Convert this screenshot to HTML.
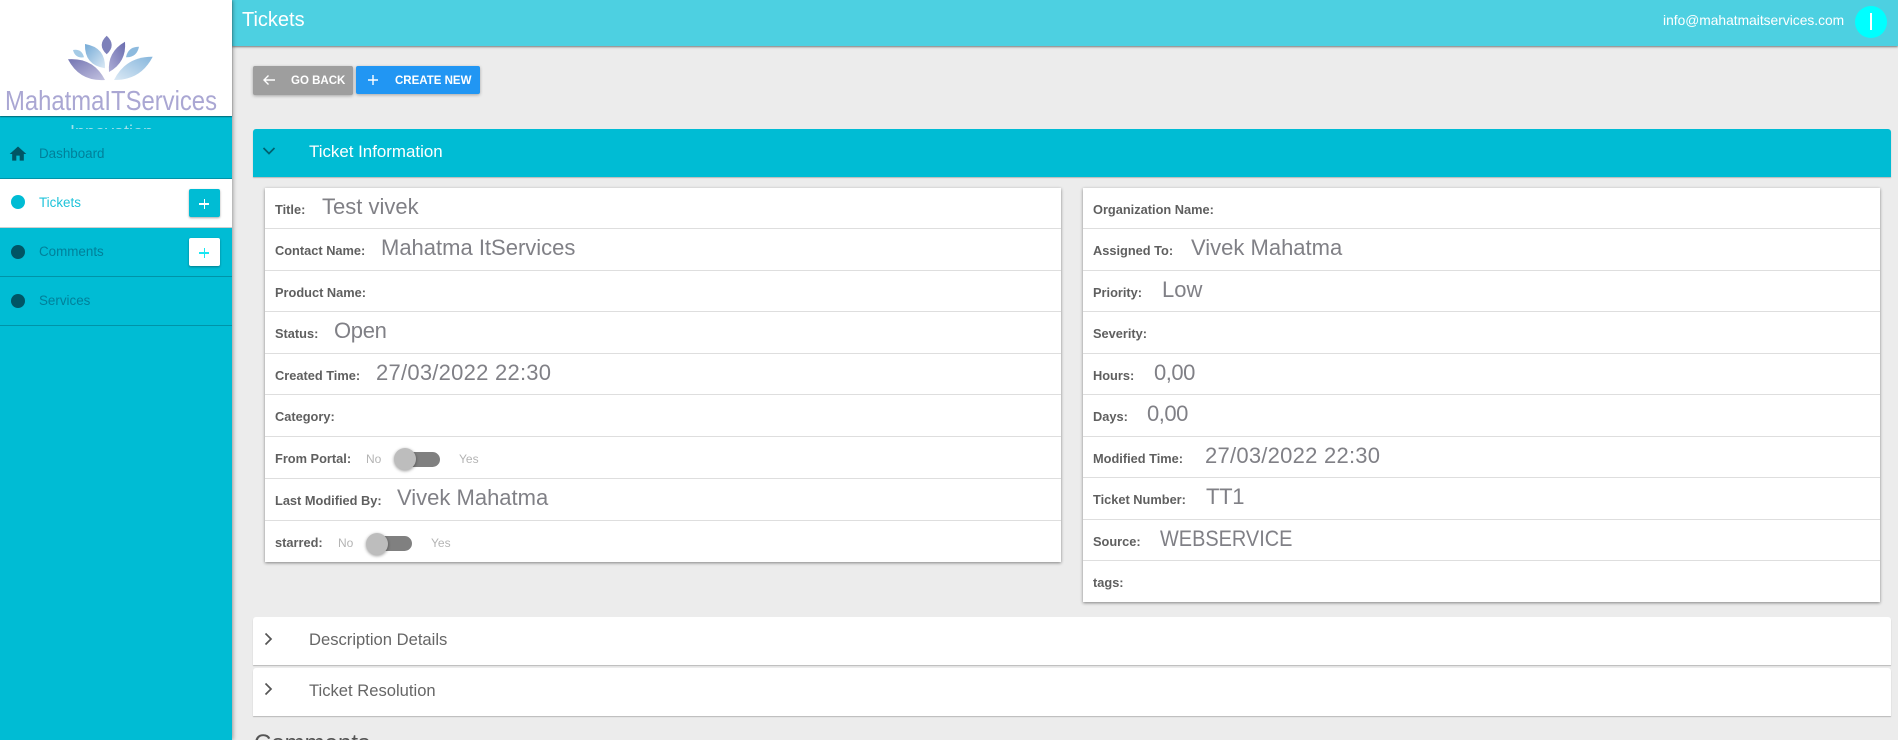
<!DOCTYPE html>
<html><head><meta charset="utf-8"><title>Tickets</title>
<style>
*{box-sizing:border-box}
html,body{margin:0;padding:0;width:1898px;height:740px;overflow:hidden;background:#ececec;font-family:"Liberation Sans",sans-serif}
#w{position:relative;width:1898px;height:740px;overflow:hidden;background:#ececec}
.a{position:absolute}
.t{position:absolute;white-space:nowrap;line-height:24px;height:24px}
.l{font-weight:bold;font-size:12.8px;color:#5f5f5f;left:275px;margin-top:1px}
.r{left:1093px}
.v{font-size:22px;color:#808086;margin-top:1px}
.nav{font-size:13.4px;color:#00809a;left:39px;margin-top:1px}
.dot{position:absolute;left:11px;width:14px;height:14px;border-radius:50%;background:#005565}
.row{position:absolute;left:0;right:0;height:1px;background:#dedede}
.card{position:absolute;background:#fff;box-shadow:0 1px 3px rgba(0,0,0,.45)}
.sm{font-size:12px;color:#b4b4b4}
.track{position:absolute;width:45px;height:15px;border-radius:8px;background:#808080}
.thumb{position:absolute;width:22px;height:22px;border-radius:50%;background:#bdbdbd;box-shadow:0 1px 3px rgba(0,0,0,.4)}
.acc{position:absolute;left:253px;width:1638px;height:48px;background:#fff;border-radius:3px 3px 0 0;box-shadow:0 1px 1px rgba(0,0,0,.22)}
.acct{font-size:16.6px;color:#666;left:309px;margin-top:1px}
.pb{position:absolute;left:189px;width:31px;height:28px;border-radius:2px;box-shadow:0 1px 2px rgba(0,0,0,.35)}
.btn{position:absolute;top:66px;height:28px;border-radius:2px;box-shadow:0 1px 3px rgba(0,0,0,.3)}
.bt{font-size:11.5px;font-weight:bold;color:#fff}
</style></head>
<body>
<div id="w">
<!-- header -->
<div class="a" style="left:232px;top:0;width:1666px;height:46px;background:#4dd0e1;box-shadow:0 1px 2px rgba(0,0,0,.5)"></div>
<div class="t" style="left:242px;top:8px;font-size:20px;color:#fff">Tickets</div>
<div class="t" style="left:1663px;top:9px;font-size:13.8px;color:#fff">info@mahatmaitservices.com</div>
<div class="a" style="left:1855px;top:6px;width:32px;height:32px;border-radius:50%;background:#0ff"></div>
<div class="a" style="left:1870px;top:13px;width:2px;height:17px;background:#fff"></div>

<!-- sidebar -->
<div class="a" style="left:0;top:0;width:232px;height:740px;background:#00bcd4;box-shadow:1px 0 4px rgba(0,0,0,.35)"></div>
<div class="a" style="left:0;top:0;width:232px;height:116px;background:#fff;box-shadow:0 1px 1px rgba(0,0,0,.45)"></div>
<svg class="a" style="left:0;top:0" width="232" height="116" viewBox="0 0 232 116">
<defs>
<linearGradient id="p1" x1="0" y1="0" x2="1" y2="1"><stop offset="0" stop-color="#7475b2"/><stop offset="1" stop-color="#c3c2e0"/></linearGradient>
<linearGradient id="p2" x1="0" y1="0" x2="1" y2="1"><stop offset="0" stop-color="#74aad6"/><stop offset="1" stop-color="#dbe9f5"/></linearGradient>
<linearGradient id="p3" x1="1" y1="0" x2="0" y2="1"><stop offset="0" stop-color="#86b6dc"/><stop offset="1" stop-color="#dbe9f5"/></linearGradient>
<linearGradient id="p4" x1="1" y1="0" x2="0" y2="1"><stop offset="0" stop-color="#6a6cae"/><stop offset="1" stop-color="#adadd6"/></linearGradient>
</defs>
<path d="M106.7 35.700Q116.700 45 106.700 54.300Q96.700 45 106.700 35.700Z" fill="#7d80ba"/>
<path d="M125 41.700Q126.800 62 109 72Q107.200 51.700 125 41.700Z" fill="url(#p4)"/>
<path d="M85 44Q105.800 47.400 105 68.300Q84.200 65 85 44Z" fill="url(#p2)"/>
<path d="M68 59.300Q93.400 57.400 105 80Q79.600 81.800 68 59.300Z" fill="url(#p1)"/>
<path d="M152.700 56.700Q140.600 80.300 114 80Q126 56.300 152.700 56.700Z" fill="url(#p3)"/>
<path d="M73 50Q81.800 48.600 84 57.300Q75.200 58.600 73 50Z" fill="#a5cbe6"/>
<path d="M139 46.700Q136.900 57.400 126 57.300Q128.100 46.600 139 46.700Z" fill="#8dbade"/>
<text x="5" y="110" font-family="'Liberation Sans',sans-serif" font-size="27.500" fill="#aaa7d3" textLength="212" lengthAdjust="spacingAndGlyphs">MahatmaITServices</text>
</svg>
<div class="a" style="left:0;top:116px;width:232px;height:13px;overflow:hidden"><div class="t" style="left:70px;top:4px;font-size:18px;color:#9fe0ea">Innovation</div></div>

<!-- nav -->
<svg class="a" style="left:8px;top:144px" width="20" height="20" viewBox="0 0 24 24"><path d="M10 20v-6h4v6h5v-8h3L12 3 2 12h3v8z" fill="#005565"/></svg>
<div class="t nav" style="top:141px">Dashboard</div>
<div class="a" style="left:0;top:178px;width:232px;height:1px;background:#0093a8"></div>
<div class="a" style="left:0;top:179px;width:232px;height:48px;background:#fff"></div>
<div class="a" style="left:0;top:227px;width:232px;height:1px;background:#cfcfcf"></div>
<div class="dot" style="top:195px;background:#00bcd4"></div>
<div class="t nav" style="top:190px;color:#1fc3da">Tickets</div>
<div class="pb" style="top:189px;background:#00bcd4"></div>
<div class="a" style="left:199px;top:203px;width:10px;height:1.5px;background:#fff"></div>
<div class="a" style="left:203.5px;top:199px;width:1.5px;height:10px;background:#fff"></div>
<div class="dot" style="top:245px"></div>
<div class="t nav" style="top:239px">Comments</div>
<div class="pb" style="top:238px;background:#fff"></div>
<div class="a" style="left:199px;top:252px;width:10px;height:1.5px;background:#19e6f2"></div>
<div class="a" style="left:203.5px;top:248px;width:1.5px;height:10px;background:#19e6f2"></div>
<div class="a" style="left:0;top:276px;width:232px;height:1px;background:#0093a8"></div>
<div class="dot" style="top:294px"></div>
<div class="t nav" style="top:288px">Services</div>
<div class="a" style="left:0;top:325px;width:232px;height:1px;background:#0093a8"></div>

<!-- buttons -->
<div class="btn" style="left:253px;width:100px;height:29px;background:#9e9e9e"></div>
<svg class="a" style="left:262px;top:73px" width="15" height="14" viewBox="0 0 15 14"><path d="M13 7H2M6.500 2.500L2 7l4.500 4.500" fill="none" stroke="#fff" stroke-width="1.400"/></svg>
<div class="t bt" style="left:291px;top:69px">GO BACK</div>
<div class="btn" style="left:356px;width:124px;background:#2196f3"></div>
<svg class="a" style="left:366px;top:73px" width="14" height="14" viewBox="0 0 14 14"><path d="M7 2v10M2 7h10" fill="none" stroke="#fff" stroke-width="1.400"/></svg>
<div class="t bt" style="left:395px;top:69px">CREATE NEW</div>

<!-- ticket info accordion -->
<div class="acc" style="top:129px;background:#00bcd4"></div>
<svg class="a" style="left:261px;top:144px" width="16" height="14" viewBox="0 0 16 14"><path d="M2.500 4L8 9.500 13.500 4" fill="none" stroke="#00606f" stroke-width="1.700"/></svg>
<div class="t" style="left:309px;top:140px;font-size:16.900px;color:#fff">Ticket Information</div>

<!-- left card -->
<div class="card" style="left:265px;top:188px;width:796px;height:374px">
<div class="row" style="top:40px"></div><div class="row" style="top:82px"></div><div class="row" style="top:123px"></div><div class="row" style="top:165px"></div><div class="row" style="top:206px"></div><div class="row" style="top:248px"></div><div class="row" style="top:290px"></div><div class="row" style="top:332px"></div>
</div>
<div class="t l" style="top:197px">Title:</div><div class="t v" style="left:322px;top:194px">Test vivek</div>
<div class="t l" style="top:238px">Contact Name:</div><div class="t v" style="left:381px;top:235px">Mahatma ItServices</div>
<div class="t l" style="top:280px">Product Name:</div>
<div class="t l" style="top:321px">Status:</div><div class="t v" style="left:334px;top:318px;letter-spacing:-.3px">Open</div>
<div class="t l" style="top:363px">Created Time:</div><div class="t v" style="left:376px;top:360px;letter-spacing:.25px">27/03/2022 22:30</div>
<div class="t l" style="top:404px">Category:</div>
<div class="t l" style="top:446px">From Portal:</div>
<div class="t sm" style="left:366px;top:447px">No</div><div class="track" style="left:395px;top:452px"></div><div class="thumb" style="left:394px;top:448px"></div><div class="t sm" style="left:459px;top:447px">Yes</div>
<div class="t l" style="top:488px">Last Modified By:</div><div class="t v" style="left:397px;top:485px">Vivek Mahatma</div>
<div class="t l" style="top:530px">starred:</div>
<div class="t sm" style="left:338px;top:531px">No</div><div class="track" style="left:367px;top:536px"></div><div class="thumb" style="left:366px;top:533px"></div><div class="t sm" style="left:431px;top:531px">Yes</div>

<!-- right card -->
<div class="card" style="left:1083px;top:188px;width:797px;height:414px">
<div class="row" style="top:40px"></div><div class="row" style="top:82px"></div><div class="row" style="top:123px"></div><div class="row" style="top:165px"></div><div class="row" style="top:206px"></div><div class="row" style="top:248px"></div><div class="row" style="top:289px"></div><div class="row" style="top:331px"></div><div class="row" style="top:372px"></div>
</div>
<div class="t l r" style="top:197px">Organization Name:</div>
<div class="t l r" style="top:238px">Assigned To:</div><div class="t v" style="left:1191px;top:235px">Vivek Mahatma</div>
<div class="t l r" style="top:280px">Priority:</div><div class="t v" style="left:1162px;top:277px">Low</div>
<div class="t l r" style="top:321px">Severity:</div>
<div class="t l r" style="top:363px">Hours:</div><div class="t v" style="left:1154px;top:360px;letter-spacing:-.5px">0,00</div>
<div class="t l r" style="top:404px">Days:</div><div class="t v" style="left:1147px;top:401px;letter-spacing:-.5px">0,00</div>
<div class="t l r" style="top:446px">Modified Time:</div><div class="t v" style="left:1205px;top:443px;letter-spacing:.25px">27/03/2022 22:30</div>
<div class="t l r" style="top:487px">Ticket Number:</div><div class="t v" style="left:1206px;top:484px;letter-spacing:-.3px">TT1</div>
<div class="t l r" style="top:529px">Source:</div><div class="t v" style="left:1160px;top:526px;transform:scaleX(.905);transform-origin:0 0">WEBSERVICE</div>
<div class="t l r" style="top:570px">tags:</div>

<!-- collapsed accordions -->
<div class="acc" style="top:617px"></div>
<svg class="a" style="left:261px;top:631px" width="14" height="16" viewBox="0 0 14 16"><path d="M4.500 2.500L10 8l-5.500 5.500" fill="none" stroke="#555" stroke-width="1.700"/></svg>
<div class="t acct" style="top:627px">Description Details</div>
<div class="acc" style="top:668px"></div>
<svg class="a" style="left:261px;top:681px" width="14" height="16" viewBox="0 0 14 16"><path d="M4.500 2.500L10 8l-5.500 5.500" fill="none" stroke="#555" stroke-width="1.700"/></svg>
<div class="t acct" style="top:678px">Ticket Resolution</div>

<div class="t" style="left:254px;top:730px;font-size:24px;line-height:28px;height:28px;color:#555">Comments</div>
</div>
</body></html>
